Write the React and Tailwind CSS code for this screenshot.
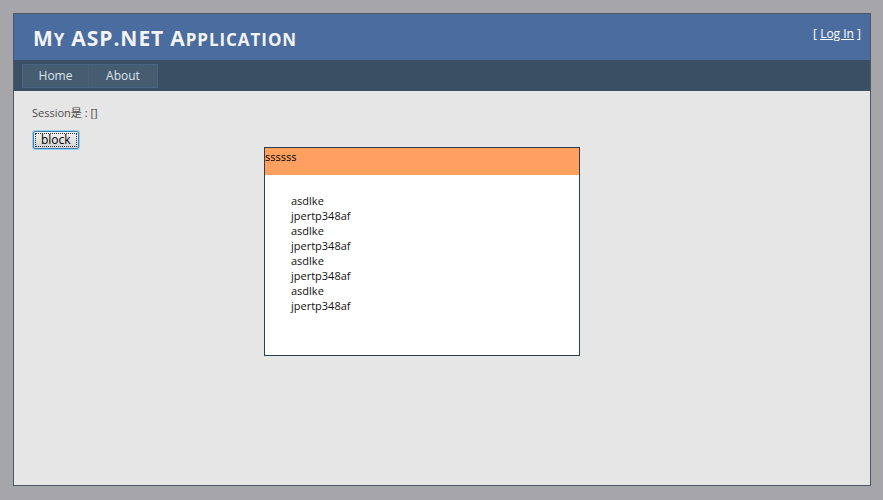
import { useState } from "react";

const ITEMS = ["asdlke", "jpertp348af", "asdlke", "jpertp348af", "asdlke", "jpertp348af", "asdlke", "jpertp348af"];

// Title words: first letter full size, the rest as small caps
const TITLE = [
  ["M", "Y"],
  ["ASP.NET", ""],
  ["A", "PPLICATION"],
];

export default function App() {
  const [open, setOpen] = useState(true);

  return (
    <div
      className="w-[883px] h-[500px] bg-[#a5a5aa] pt-[13px] pl-[13px] overflow-hidden"
      style={{ fontFamily: '"Open Sans", "Noto Sans CJK SC", sans-serif' }}
    >
      <div className="relative w-[858px] h-[473px] bg-[#e6e6e6] border border-[#4d5666] flex flex-col">
        {/* Header */}
        <div className="h-[46px] bg-[#4b6c9e] flex justify-between items-start">
          <h1 className="pl-[19px] pt-[11px] flex items-baseline gap-[6px] leading-[26px] font-bold text-[#f2f3f5] tracking-[0.95px]">
            {TITLE.map(([big, small], i) => (
              <span key={i}>
                <span className="text-[21px]">{big}</span>
                <span className="text-[17px]">{small}</span>
              </span>
            ))}
          </h1>
          <div className="pt-[11px] pr-[9px] text-[12px] text-white">
            [ <a className="underline cursor-pointer">Log In</a> ]
          </div>
        </div>

        {/* Menu bar */}
        <div className="h-[31px] bg-[#3a4f63] pl-[8px] pt-[4px]">
          <ul className="flex h-[24px]">
            <li className="w-[67px] flex items-center justify-center bg-[#465c71] border border-[#4b6c9e]/40 text-[12px] text-[#dde4ec]">
              Home
            </li>
            <li className="w-[69px] flex items-center justify-center bg-[#465c71] border border-[#4b6c9e]/40 border-l-0 text-[12px] text-[#dde4ec]">
              About
            </li>
          </ul>
        </div>

        {/* Main content */}
        <div className="flex-1 px-[18px] pt-[14px]">
          <p className="text-[11px] leading-[16px] text-[#4a4a4a]">Session是 : []</p>
          <button
            onClick={() => setOpen(!open)}
            className="mt-[10px] ml-[1px] h-[18px] px-[7px] text-[12px] leading-[14px] text-black bg-gradient-to-b from-[#f2f2f2] to-[#d4d4d4] border border-[#3c7fb1] rounded-[2px] outline-1 outline-dotted outline-[#333] -outline-offset-[3px] shadow-[0_0_0_1px_#8fd0f3]"
          >
            block
          </button>
        </div>

        {/* Popup */}
        {open && (
          <div className="absolute left-[250px] top-[133px] w-[316px] h-[209px] bg-white border border-[#2e3d4f]">
            <div className="h-[27px] bg-[#ffa060] text-[11px] leading-[16px] text-black pt-[1px]">ssssss</div>
            <ul className="pl-[26px] pt-[18px]">
              {ITEMS.map((t, i) => (
                <li key={i} className="text-[11px] leading-[15px] text-[#111]">
                  {t}
                </li>
              ))}
            </ul>
          </div>
        )}
      </div>
    </div>
  );
}
